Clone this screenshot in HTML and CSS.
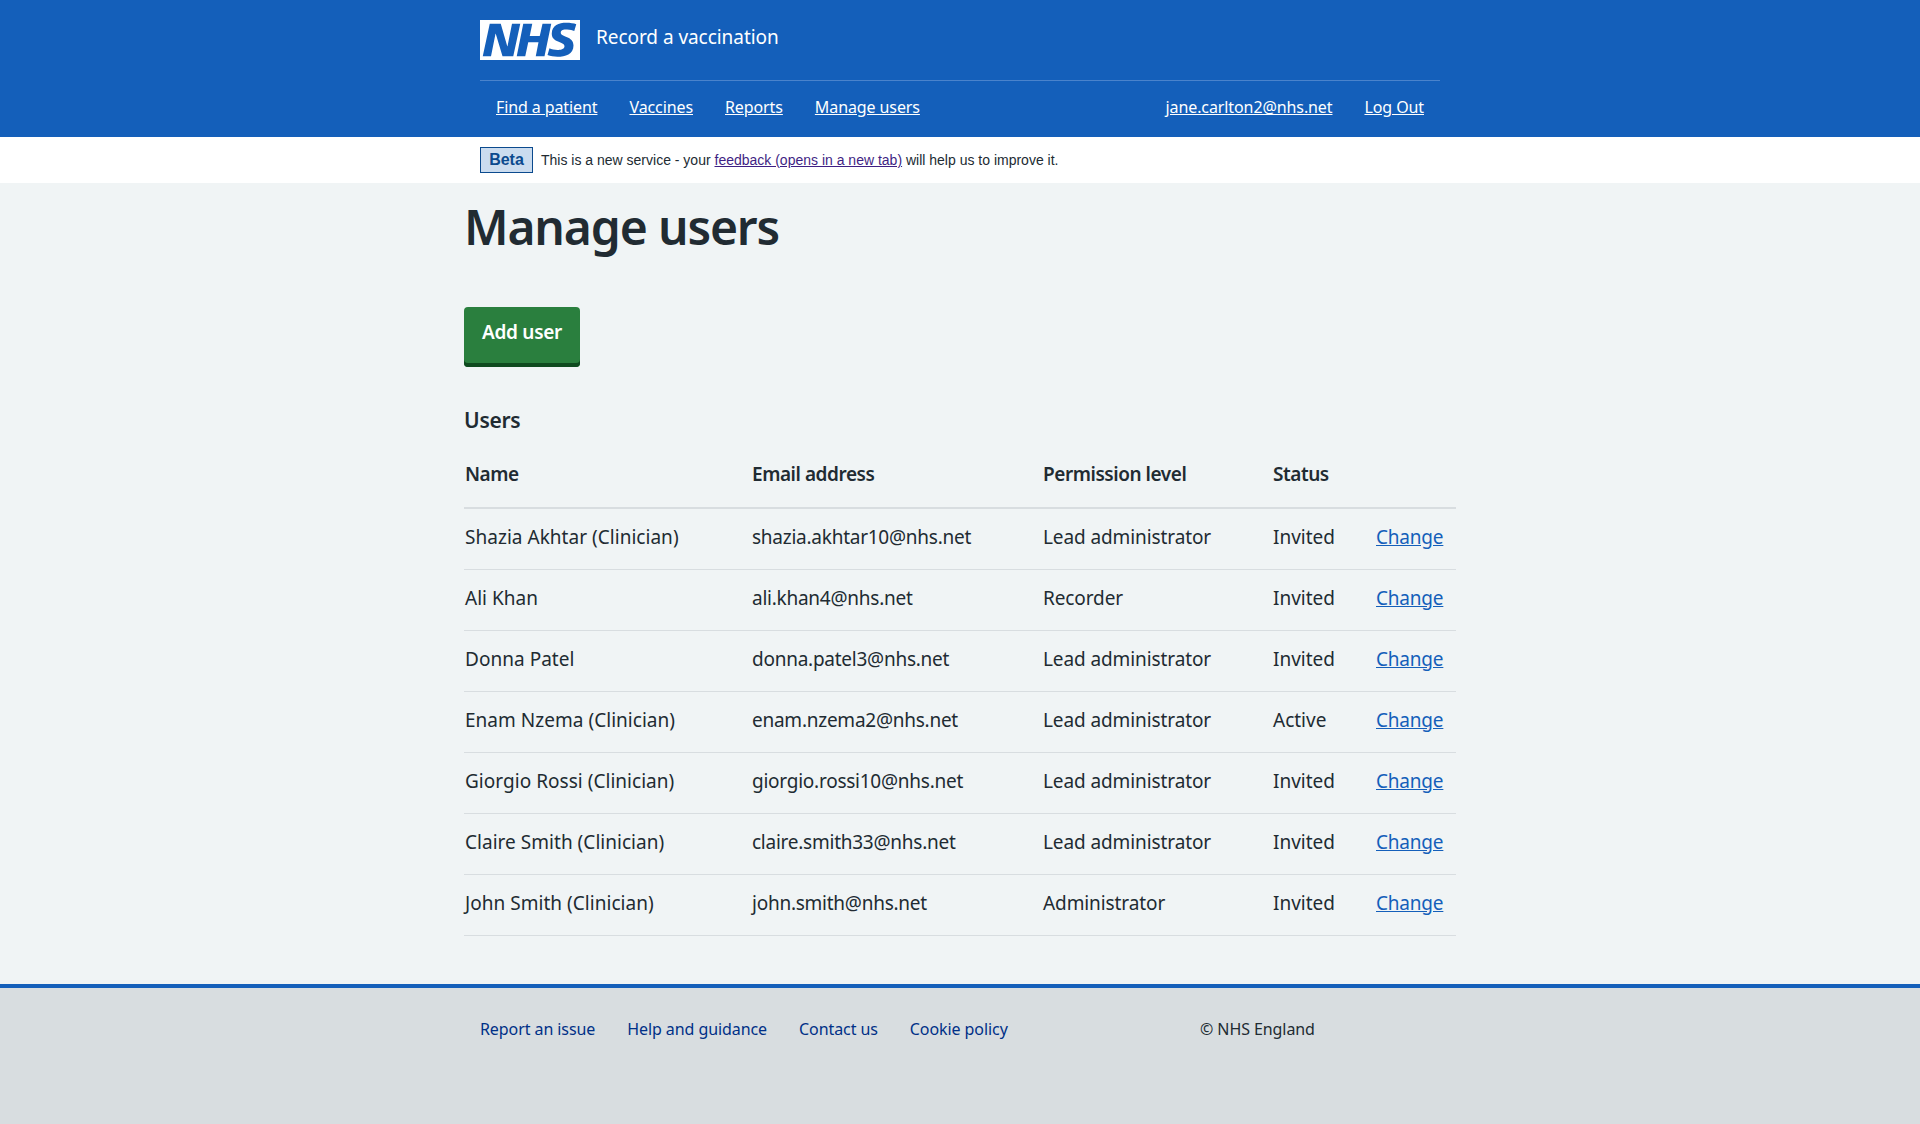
FILE: index.html
```html
<!DOCTYPE html>
<html lang="en">
<head>
<meta charset="utf-8">
<title>Manage users</title>
<link rel="stylesheet" href="styles.css">
</head>
<body>
<header class="site-header">
  <div class="header-inner">
    <div class="brand">
      <svg class="logo" viewBox="0 0 40 16" role="img" aria-label="NHS"><path fill="#fff" d="M0 0h40v16H0z"/><path fill="#145fba" d="M3.9 1.5h4.4l2.6 9h.1l1.8-9h3.3l-2.8 13H9l-2.7-9h-.1l-1.8 9H1.1M17.3 1.5h3.6l-1 4.9h4L25 1.5h3.5l-2.7 13h-3.5l1.1-5.6h-4.1l-1.2 5.6h-3.4M37.7 4.4c-.7-.3-1.6-.6-2.9-.6-1.4 0-2.5.2-2.5 1.3 0 1.8 5.1 1.2 5.1 5.1 0 3.6-3.3 4.5-6.4 4.5-1.3 0-2.9-.3-4-.7l.8-2.7c.7.4 2.1.7 3.2.7s2.8-.2 2.8-1.5c0-2.1-5.1-1.3-5.1-5 0-3.4 2.9-4.4 5.8-4.4 1.6 0 3.1.2 4 .6"/></svg>
      <span class="service">Record a vaccination</span>
    </div>
    <nav class="nav">
      <div class="nav-group">
        <a href="#">Find a patient</a>
        <a href="#">Vaccines</a>
        <a href="#">Reports</a>
        <a href="#">Manage users</a>
      </div>
      <div class="nav-group">
        <a href="#">jane.carlton2@nhs.net</a>
        <a href="#">Log Out</a>
      </div>
    </nav>
  </div>
</header>
<div class="beta-band">
  <div class="beta-inner">
    <strong class="beta-tag">Beta</strong>
    <span class="beta-text">This is a new service - your <a href="#">feedback (opens in a new tab)</a> will help us to improve it.</span>
  </div>
</div>
<main class="main">
  <h1>Manage users</h1>
  <a class="button" href="#">Add user</a>
  <h2>Users</h2>
  <table class="users">
    <thead>
      <tr><th class="c-name">Name</th><th class="c-email">Email address</th><th class="c-perm">Permission level</th><th class="c-status">Status</th><th class="c-action"></th></tr>
    </thead>
    <tbody>
      <tr><td class="t-name">Shazia Akhtar (Clinician)</td><td class="t-email">shazia.akhtar10@nhs.net</td><td class="t-perm">Lead administrator</td><td>Invited</td><td><a href="#">Change</a></td></tr>
      <tr><td class="t-name">Ali Khan</td><td class="t-email">ali.khan4@nhs.net</td><td class="t-perm">Recorder</td><td>Invited</td><td><a href="#">Change</a></td></tr>
      <tr><td class="t-name">Donna Patel</td><td class="t-email">donna.patel3@nhs.net</td><td class="t-perm">Lead administrator</td><td>Invited</td><td><a href="#">Change</a></td></tr>
      <tr><td class="t-name">Enam Nzema (Clinician)</td><td class="t-email">enam.nzema2@nhs.net</td><td class="t-perm">Lead administrator</td><td>Active</td><td><a href="#">Change</a></td></tr>
      <tr><td class="t-name">Giorgio Rossi (Clinician)</td><td class="t-email">giorgio.rossi10@nhs.net</td><td class="t-perm">Lead administrator</td><td>Invited</td><td><a href="#">Change</a></td></tr>
      <tr><td class="t-name">Claire Smith (Clinician)</td><td class="t-email">claire.smith33@nhs.net</td><td class="t-perm">Lead administrator</td><td>Invited</td><td><a href="#">Change</a></td></tr>
      <tr><td class="t-name">John Smith (Clinician)</td><td class="t-email">john.smith@nhs.net</td><td class="t-perm">Administrator</td><td>Invited</td><td><a href="#">Change</a></td></tr>
    </tbody>
  </table>
</main>
<footer class="footer">
  <div class="footer-inner">
    <div class="footer-links">
      <a href="#">Report an issue</a>
      <a href="#">Help and guidance</a>
      <a href="#">Contact us</a>
      <a href="#">Cookie policy</a>
    </div>
    <p class="copyright">© NHS England</p>
  </div>
</footer>
</body>
</html>
```
FILE: styles.css
```css
* { box-sizing: border-box; }
html, body { margin: 0; padding: 0; }
body {
  background: #f0f4f5;
  color: #212b32;
  font-family: "Noto Sans", "Open Sans", sans-serif;
  font-size: 19px;
  line-height: 28px;
}
.site-header { background: #145fba; height: 137px; color: #fff; }
.header-inner { width: 960px; margin: 0 auto; }
.brand { display: flex; align-items: flex-start; height: 81px; padding-top: 20px; border-bottom: 1px solid #4a83cc; }
.logo { display: block; width: 100px; height: 40px; }
.service { font-size: 19px; margin-left: 16px; margin-top: 3px; letter-spacing: -0.05px; }
.nav { display: flex; justify-content: space-between; padding: 14px 16px 0; font-size: 16px; line-height: 24px; letter-spacing: -0.1px; }
.nav-group { display: flex; gap: 32px; }
.nav a { color: #fff; }
.beta-band { background: #fff; height: 46px; }
.beta-inner { width: 960px; margin: 0 auto; display: flex; align-items: center; padding-top: 10px; font-family: "Liberation Sans", Arial, sans-serif; font-size: 14px; line-height: 16px; color: #212b32; }
.beta-tag { background: #cbdcef; border: 1px solid #0b4a8e; color: #0b4a8e; padding: 2px 0; font-size: 16px; line-height: 20px; width: 53px; height: 26px; text-align: center; white-space: nowrap; }
.beta-text { margin-left: 8px; }
.beta-text a { color: #3f1f84; }
.main { width: 992px; margin: 0 auto; padding-top: 16px; height: 801px; }
h1 { margin: 0 0 52px; font-size: 48px; line-height: 56px; font-weight: 600; letter-spacing: -1.15px; }
.button { display: block; width: 116px; height: 60px; padding: 11px 0 0; text-align: center; background: #2a7f3e; color: #fff; font-weight: 600; font-size: 19px; letter-spacing: -0.3px; text-decoration: none; border-radius: 4px; box-shadow: inset 0 -4px 0 #0f4a1f; }
h2 { margin: 37px 0 16px; font-size: 21px; line-height: 32px; font-weight: 600; letter-spacing: -0.3px; }
.users { width: 992px; border-collapse: collapse; table-layout: fixed; }
.users th, .users td { text-align: left; padding: 14px 1px; height: 61px; border-bottom: 1px solid #d8dde0; vertical-align: top; }
.users th { font-weight: 600; letter-spacing: -0.45px; border-bottom: 2px solid #d8dde0; height: 56px; padding: 8px 1px 18px; }
.users a { color: #145fba; letter-spacing: -0.2px; }
.t-name { letter-spacing: 0.03px; }
.t-email { letter-spacing: -0.25px; }
.t-perm { letter-spacing: -0.1px; }
.c-name { width: 287px; }
.c-email { width: 291px; }
.c-perm { width: 230px; }
.c-status { width: 103px; }
.footer { background: #d8dde0; border-top: 4px solid #145fba; height: 140px; }
.footer-inner { width: 960px; margin: 0 auto; display: flex; padding-top: 29px; font-size: 16px; line-height: 24px; letter-spacing: -0.08px; }
.footer-links { display: flex; gap: 32px; width: 720px; }
.footer-links a { color: #003087; text-decoration: none; }
.copyright { margin: 0; }
```
